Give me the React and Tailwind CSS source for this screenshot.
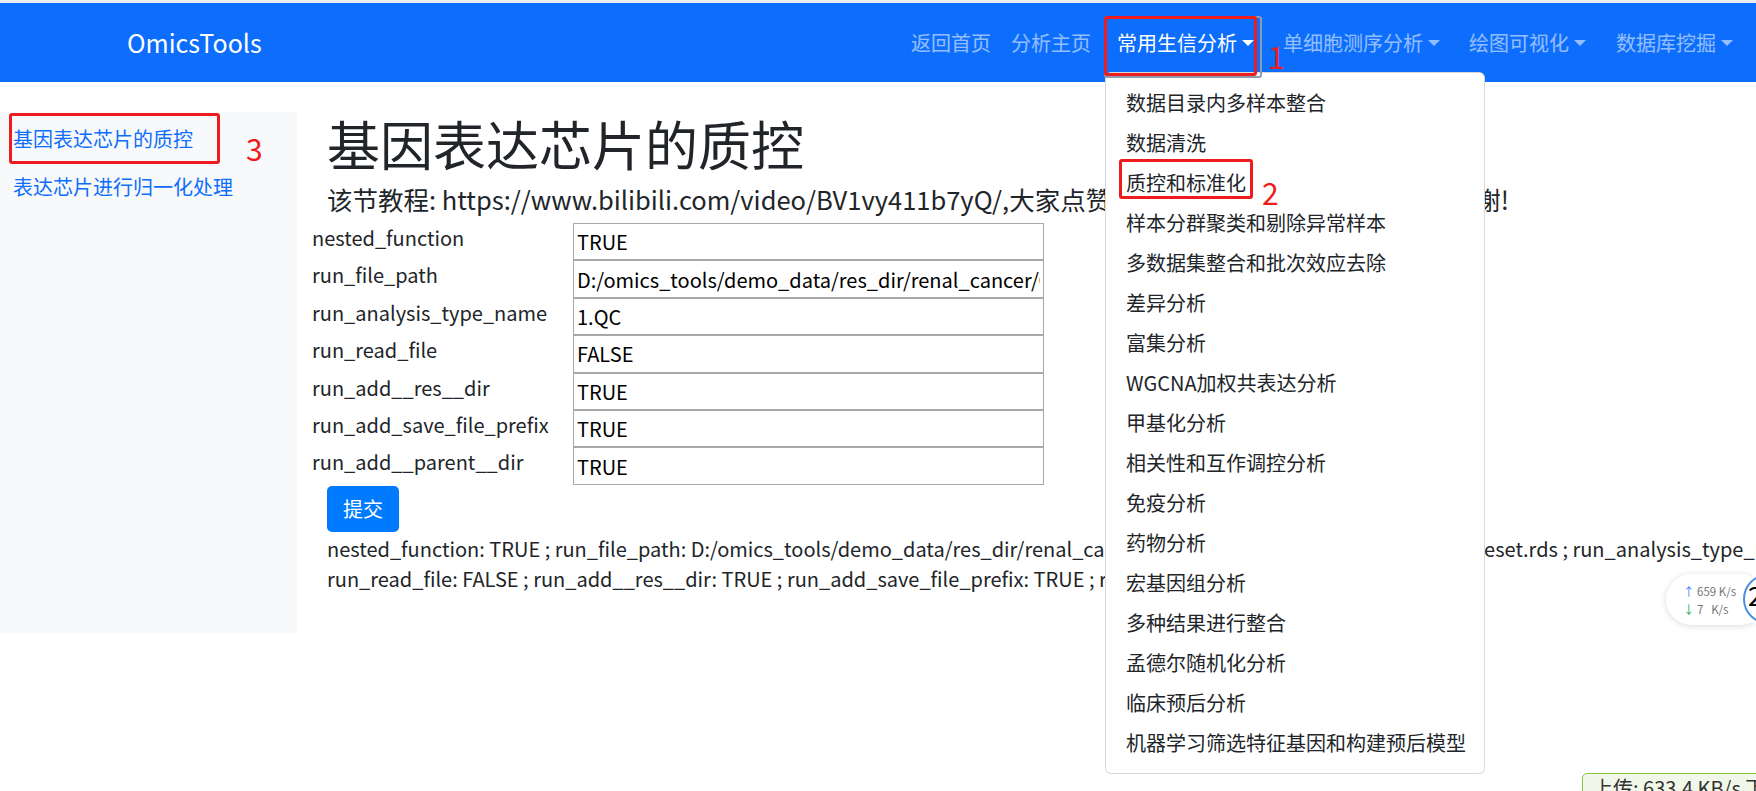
import React from 'react';

const navLinks = [
  { label: '返回首页', active: false, caret: false, gap: '' },
  { label: '分析主页', active: false, caret: false, gap: '' },
  { label: '常用生信分析', active: true, caret: true, gap: 'ml-[6px]' },
  { label: '单细胞测序分析', active: false, caret: true, gap: 'ml-[9px]' },
  { label: '绘图可视化', active: false, caret: true, gap: 'ml-[9px]' },
  { label: '数据库挖掘', active: false, caret: true, gap: 'ml-[10px]' },
];

const menuItems = [
  '数据目录内多样本整合',
  '数据清洗',
  '质控和标准化',
  '样本分群聚类和剔除异常样本',
  '多数据集整合和批次效应去除',
  '差异分析',
  '富集分析',
  'WGCNA加权共表达分析',
  '甲基化分析',
  '相关性和互作调控分析',
  '免疫分析',
  '药物分析',
  '宏基因组分析',
  '多种结果进行整合',
  '孟德尔随机化分析',
  '临床预后分析',
  '机器学习筛选特征基因和构建预后模型',
];

const filePath = 'D:/omics_tools/demo_data/res_dir/renal_cancer/GSE53757/1.preprocess/GSE53757_eset.rds';

const fields = [
  ['nested_function', 'TRUE'],
  ['run_file_path', filePath],
  ['run_analysis_type_name', '1.QC'],
  ['run_read_file', 'FALSE'],
  ['run_add__res__dir', 'TRUE'],
  ['run_add_save_file_prefix', 'TRUE'],
  ['run_add__parent__dir', 'TRUE'],
];

const Caret = () => (
  <span className="ml-[5px] inline-block h-0 w-0 border-x-[6px] border-t-[6px] border-b-0 border-x-transparent border-t-current" />
);

// red boxes / numbers drawn over the screenshot
const Mark = ({ className }) => (
  <div className={`pointer-events-none absolute rounded-[3px] border-[3px] border-[#ee1c1c] ${className}`} />
);

const Num = ({ className, children }) => (
  <span className={`pointer-events-none absolute text-[30px] leading-none text-[#ee1c1c] ${className}`}>{children}</span>
);

export default function App() {
  return (
    <div className="relative h-[791px] w-full overflow-hidden bg-white font-['Noto_Sans_CJK_SC','Noto_Sans',sans-serif] text-[#212529]">
      <div className="h-[3px] bg-[#eceff1]" />

      {/* navbar */}
      <nav className="flex h-[79px] items-center bg-[#0d6efd] pl-[127px] pr-[13px]">
        <span className="text-[25px] leading-[37px] text-white">OmicsTools</span>
        <ul className="ml-auto flex items-center text-[20px] leading-[30px]">
          {navLinks.map((l) => (
            <li key={l.label} className={l.gap}>
              <a className={`flex items-center px-[10px] py-[10px] ${l.active ? 'text-white' : 'text-white/55'}`}>
                {l.label}
                {l.caret && <Caret />}
              </a>
            </li>
          ))}
        </ul>
      </nav>

      <div className="flex pt-[30px]">
        {/* sidebar */}
        <aside className="h-[521px] w-[297px] shrink-0 bg-[#f8f9fa] pt-[3px]">
          <a className="block px-[13px] py-[9px] text-[20px] leading-[30px] text-[#0d6efd]">基因表达芯片的质控</a>
          <a className="block px-[13px] py-[9px] text-[20px] leading-[30px] text-[#0d6efd]">表达芯片进行归一化处理</a>
        </aside>

        {/* main */}
        <main className="min-w-0 flex-1 pl-[30px]">
          <h1 className="mb-[10px] text-[53px] leading-[62px] font-normal">基因表达芯片的质控</h1>
          <h5 className="mb-[10px] whitespace-nowrap text-[25.5px] leading-[29px]">
            该节教程: https://www.bilibili.com/video/BV1vy411b7yQ/,大家点赞投币收藏转发，有问题请留言,谢谢!
          </h5>

          <div className="-ml-[15px]">
            {fields.map(([label, value]) => (
              <div key={label} className="flex h-[37.4px]">
                <label className="w-[261px] shrink-0 text-[20px] leading-[30px]">{label}</label>
                <input
                  readOnly
                  value={value}
                  className="h-full w-[471px] border border-[#a8a8a8] bg-white px-[3px] text-[20px] text-black outline-none"
                />
              </div>
            ))}
          </div>

          <button className="mt-[1px] rounded-[5px] bg-[#007bff] px-[16px] py-[8px] text-[20px] leading-[30px] text-white">
            提交
          </button>

          <div className="mt-[2px] text-[20px] leading-[30px]">
            <div className="whitespace-nowrap">
              nested_function: TRUE ; run_file_path: {filePath} ; run_analysis_type_name: 1.QC ;
            </div>
            <div className="whitespace-nowrap">
              run_read_file: FALSE ; run_add__res__dir: TRUE ; run_add_save_file_prefix: TRUE ; run_add__parent__dir: TRUE
            </div>
          </div>
        </main>
      </div>

      {/* open dropdown */}
      <div className="absolute left-[1105px] top-[72px] w-[380px] rounded-[6px] border border-black/15 bg-white py-[10px]">
        {menuItems.map((item) => (
          <a key={item} className="block whitespace-nowrap px-[20px] py-[5px] text-[20px] leading-[30px] text-[#212529]">
            {item}
          </a>
        ))}
      </div>

      {/* annotations */}
      <div className="pointer-events-none absolute left-[1104px] top-[16px] h-[62px] w-[158px] rounded-[3px] border-2 border-[#8d9bb0]" />
      <Mark className="left-[1104px] top-[16px] h-[60px] w-[153px]" />
      <Num className="left-[1268px] top-[41px]">1</Num>
      <Mark className="left-[1119px] top-[159px] h-[40px] w-[134px]" />
      <Num className="left-[1262px] top-[177px]">2</Num>
      <Mark className="left-[9px] top-[113px] h-[51px] w-[211px]" />
      <Num className="left-[246px] top-[133px]">3</Num>

      {/* net speed widgets */}
      <div className="absolute left-[1666px] top-[574px] flex h-[51px] w-[100px] flex-col justify-center rounded-full bg-white pl-[17px] text-[11.5px] leading-[18px] text-[#777] shadow-[0_1px_6px_rgba(0,0,0,0.15)]">
        <span><span className="text-[#3b82f6]">↑</span> 659 K/s</span>
        <span><span className="text-[#22a55a]">↓</span> 7&nbsp;&nbsp;&nbsp;K/s</span>
      </div>
      <div className="absolute left-[1739px] top-[570px] h-[58px] w-[58px]">
        <svg width="58" height="58" viewBox="0 0 58 58" className="absolute inset-0">
          <circle cx="29" cy="29" r="28" fill="#fff" />
          <path d="M 29 5 A 24 24 0 0 0 29 53" fill="none" stroke="#4a90e2" strokeWidth="2" />
        </svg>
        <span className="absolute left-[9px] top-[12px] text-[26px] leading-none text-black">2</span>
      </div>
      <div className="absolute left-[1582px] top-[773px] h-[30px] w-[210px] rounded-t-[5px] border border-[#8bc34a] bg-[#f1f8e9] pl-[10px] text-[20px] leading-[28px] whitespace-nowrap text-[#333]">
        上传: 633.4 KB/s 下载: 1.2 MB/s
      </div>
    </div>
  );
}
